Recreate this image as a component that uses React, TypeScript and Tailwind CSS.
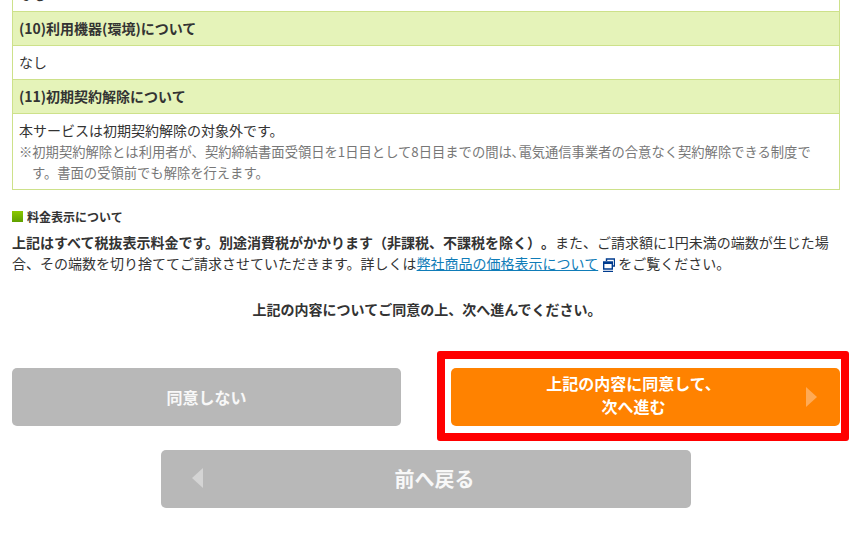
function TableHead({ children }: { children: React.ReactNode }) {
  return (
    <div className="h-[34px] border-b border-[#cde18a] bg-[#e5f3b9] px-[6px] text-[14px] leading-[33px] font-bold text-[#333]">
      {children}
    </div>
  );
}

function TableCell({ children }: { children: React.ReactNode }) {
  return <div className="border-b border-[#cde18a] bg-white px-[6px] text-[14px] text-[#333]">{children}</div>;
}

export default function App() {
  return (
    <div className="h-[538px] w-[854px] overflow-hidden bg-white font-['Noto_Sans_CJK_JP','Noto_Sans',sans-serif] [text-spacing-trim:space-all]">
      <div className="px-3">
        <div className="-mt-[22px] w-[828px] border-x border-[#cde18a]">
          <TableCell>
            <div className="h-[33px] leading-[33px]">なし</div>
          </TableCell>
          <TableHead>(10)利用機器(環境)について</TableHead>
          <TableCell>
            <div className="h-[33px] leading-[33px]">なし</div>
          </TableCell>
          <TableHead>(11)初期契約解除について</TableHead>
          <TableCell>
            <div className="pt-[6px] pb-[6px] leading-[21px]">
              <p>本サービスは初期契約解除の対象外です。</p>
              <p className="pl-[13px] -indent-[13px] text-[13.3px] text-[#777]">
                ※初期契約解除とは利用者が、契約締結書面受領日を1日目として8日目までの間は､電気通信事業者の合意なく契約解除できる制度です。書面の受領前でも解除を行えます。
              </p>
            </div>
          </TableCell>
        </div>

        <h3 className="mt-[17px] flex h-[19px] items-center text-[12px] font-bold text-[#333]">
          <span className="mr-[4px] h-[11px] w-[11px] bg-gradient-to-b from-[#8cc800] to-[#5fa000]" />
          料金表示について
        </h3>
        <p className="mt-[6px] w-[828px] text-[14px] leading-[21px] text-[#333]">
          <strong>上記はすべて税抜表示料金です。別途消費税がかかります（非課税、不課税を除く）。</strong>
          また、ご請求額に1円未満の端数が生じた場合、その端数を切り捨ててご請求させていただきます。詳しくは
          <a className="text-[#0f7cb8] underline">弊社商品の価格表示について</a>
          <svg className="mr-[3px] ml-[5px] inline-block h-[14px] w-[12px] align-[-3px]" viewBox="0 0 12 14" fill="none" stroke="#003b8e">
            <path d="M3.5 3V1H11.5V8H9.5" strokeWidth="1.4" />
            <path d="M.7 4H9.3V11H.7Z" strokeWidth="1.4" />
            <path d="M.7 5H9.3" strokeWidth="2" />
            <path d="M0 13.4H10" strokeWidth="1.2" />
          </svg>
          をご覧ください。
        </p>
        <p className="mt-[25px] text-center text-[14px] leading-[21px] font-bold text-[#333]">
          上記の内容についてご同意の上、次へ進んでください。
        </p>

        <div className="mt-[31px] flex items-start justify-between">
          <button className="mt-[17px] h-[58px] w-[389px] rounded-[5px] bg-[#b8b8b8] pb-[1px] text-[16px] font-bold text-white/90">同意しない</button>
          <div className="-mr-[7px] rounded-[3px] border-[8px] border-[#ff0000] bg-white pt-[9px] pr-[1px] pb-[7px] pl-[6px]">
            <button className="relative flex h-[58px] w-[389px] items-center justify-center rounded-[5px] bg-[#ff8200] pr-[24px] pb-[4px] text-[16px] leading-[23px] font-bold text-white">
              <span className="w-[200px]">上記の内容に同意して、<br />次へ進む</span>
              <span className="absolute top-[19px] right-[23px] h-0 w-0 border-y-[10px] border-l-[11px] border-y-transparent border-l-[#ffaa55]" />
            </button>
          </div>
        </div>

        <div className="mt-[9px] flex justify-center">
          <button className="relative mr-[2px] h-[58px] w-[530px] rounded-[5px] bg-[#b8b8b8] pl-[17px] text-[20px] font-bold text-white/90">
            <span className="absolute top-[18px] left-[31px] h-0 w-0 border-y-[10px] border-r-[11px] border-y-transparent border-r-[#d4d4d4]" />
            前へ戻る
          </button>
        </div>
      </div>
    </div>
  );
}
